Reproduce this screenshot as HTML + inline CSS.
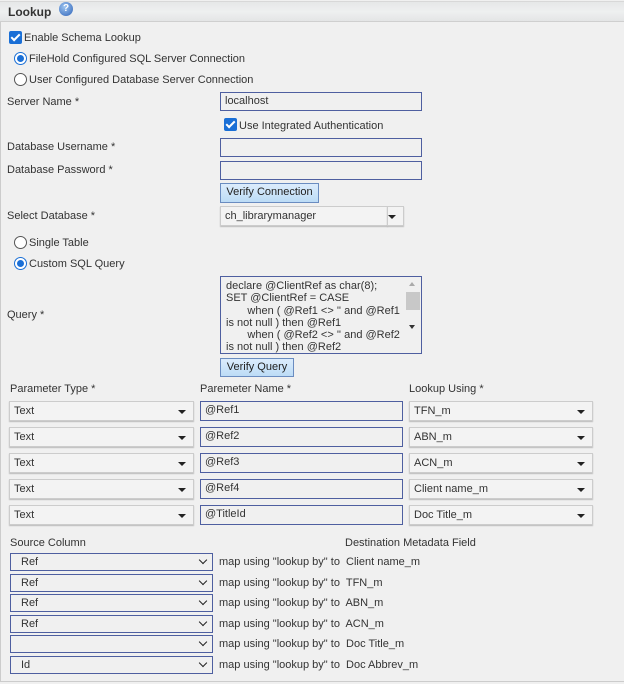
<!DOCTYPE html>
<html><head><meta charset="utf-8"><style>
*{box-sizing:border-box}
body{margin:0;width:624px;height:684px;background:#f0f0f0;font-family:"Liberation Sans",Arial,sans-serif;font-size:11px;color:#333;position:relative;overflow:hidden}
.a{position:absolute;white-space:nowrap}
.hdr{position:absolute;left:0;top:1px;width:624px;height:21px;background:linear-gradient(#e6e7e8,#eef0f0 50%,#e4e5e6);border-top:1px solid #d8d8d8;border-bottom:1px solid #cfcfcf}
.cb{position:absolute;width:13px;height:13px;background:#1a6fd6;border-radius:2px}
.cb:after{content:"";position:absolute;left:4px;top:1px;width:3px;height:7px;border:solid #fff;border-width:0 2px 2px 0;transform:rotate(45deg)}
.rd{position:absolute;width:13px;height:13px;border-radius:50%;border:1px solid #555;background:#fff}
.rd.on{border:1px solid #1a6fd6}
.rd.on:after{content:"";position:absolute;left:2px;top:2px;width:7px;height:7px;border-radius:50%;background:#1a6fd6}
.in{position:absolute;border:1px solid #4e5fa0;background:#f0f0f0;padding:2px 4px;line-height:13px}
.btn{position:absolute;border:1px solid #6a8cc0;background:linear-gradient(#dcecfc,#bcdcf6);text-align:center;line-height:17px;color:#222}
.sel{position:absolute;border:1px solid #ccc;background:#f3f3f3;box-shadow:0 1px 1px #bbb;padding:0 4px;line-height:19px;height:20px}
.sel.ar:after{content:"";position:absolute;right:7px;top:8px;border:4px solid transparent;border-top:4px solid #222;border-bottom:0}
.s2{position:absolute;border:1px solid #4e5fa0;background:#f0f0f0;height:18px;line-height:16px;padding-left:10px}
.s2:after{content:"";position:absolute;right:6px;top:3px;width:5px;height:5px;border:solid #222;border-width:0 1.5px 1.5px 0;transform:rotate(45deg)}
</style></head><body>
<div class="hdr"></div>
<div class="a" style="left:8px;top:5px;font-weight:bold;font-size:12px">Lookup</div>
<div class="a" style="left:59px;top:2px;width:14px;height:14px;border-radius:50%;background:radial-gradient(circle at 40% 35%,#9cc4f0,#2f63b8);color:#fff;font-size:10px;font-weight:bold;text-align:center;line-height:14px">?</div>
<div class="cb" style="left:9px;top:31px"></div><div class="a" style="left:24px;top:32px">Enable Schema Lookup</div>
<div class="rd on" style="left:14px;top:52px"></div><div class="a" style="left:29px;top:53px">FileHold Configured SQL Server Connection</div>
<div class="rd" style="left:14px;top:73px"></div><div class="a" style="left:29px;top:74px">User Configured Database Server Connection</div>
<div class="a" style="left:7px;top:96px">Server Name *</div>
<div class="in" style="left:220px;top:92px;width:202px;height:19px">localhost</div>
<div class="cb" style="left:224px;top:118px"></div><div class="a" style="left:239px;top:120px">Use Integrated Authentication</div>
<div class="a" style="left:7px;top:141px">Database Username *</div>
<div class="in" style="left:220px;top:138px;width:202px;height:19px"></div>
<div class="a" style="left:7px;top:164px">Database Password *</div>
<div class="in" style="left:220px;top:161px;width:202px;height:19px"></div>
<div class="btn" style="left:220px;top:183px;width:99px;height:20px">Verify Connection</div>
<div class="a" style="left:7px;top:210px">Select Database *</div>
<div class="sel" style="left:220px;top:206px;width:168px">ch_librarymanager</div>
<div class="sel ar" style="left:387px;top:206px;width:17px"></div>
<div class="rd" style="left:14px;top:236px"></div><div class="a" style="left:29px;top:237px">Single Table</div>
<div class="rd on" style="left:14px;top:257px"></div><div class="a" style="left:29px;top:258px">Custom SQL Query</div>
<div class="a" style="left:7px;top:309px">Query *</div>
<div class="in" style="left:220px;top:276px;width:202px;height:78px;padding:3px 18px 0 5px;white-space:pre;line-height:12.3px;overflow:hidden">declare @ClientRef as char(8);
SET @ClientRef = CASE
       when ( @Ref1 &lt;&gt; '' and @Ref1
is not null ) then @Ref1
       when ( @Ref2 &lt;&gt; '' and @Ref2
is not null ) then @Ref2</div>
<div class="a" style="left:406px;top:292px;width:14px;height:18px;background:#c8c8c8"></div>
<div class="a" style="left:409px;top:282px;border:3.5px solid transparent;border-bottom:4px solid #aaa;border-top:0"></div>
<div class="a" style="left:409px;top:325px;border:3.5px solid transparent;border-top:4px solid #333;border-bottom:0"></div>
<div class="btn" style="left:220px;top:358px;width:74px;height:19px">Verify Query</div>
<div class="a" style="left:10px;top:383px">Parameter Type *</div>
<div class="a" style="left:200px;top:383px">Paremeter Name *</div>
<div class="a" style="left:409px;top:383px">Lookup Using *</div>
<div class="sel ar" style="left:9px;top:401px;width:185px">Text</div><div class="in" style="left:200px;top:401px;width:203px;height:20px">@Ref1</div><div class="sel ar" style="left:409px;top:401px;width:184px">TFN_m</div>
<div class="sel ar" style="left:9px;top:427px;width:185px">Text</div><div class="in" style="left:200px;top:427px;width:203px;height:20px">@Ref2</div><div class="sel ar" style="left:409px;top:427px;width:184px">ABN_m</div>
<div class="sel ar" style="left:9px;top:453px;width:185px">Text</div><div class="in" style="left:200px;top:453px;width:203px;height:20px">@Ref3</div><div class="sel ar" style="left:409px;top:453px;width:184px">ACN_m</div>
<div class="sel ar" style="left:9px;top:479px;width:185px">Text</div><div class="in" style="left:200px;top:479px;width:203px;height:20px">@Ref4</div><div class="sel ar" style="left:409px;top:479px;width:184px">Client name_m</div>
<div class="sel ar" style="left:9px;top:505px;width:185px">Text</div><div class="in" style="left:200px;top:505px;width:203px;height:20px">@TitleId</div><div class="sel ar" style="left:409px;top:505px;width:184px">Doc Title_m</div>
<div class="a" style="left:10px;top:537px">Source Column</div>
<div class="a" style="left:345px;top:537px">Destination Metadata Field</div>
<div class="s2" style="left:10px;top:553px;width:203px">Ref</div><div class="a" style="left:219px;top:556px">map using "lookup by" to&nbsp; Client name_m</div>
<div class="s2" style="left:10px;top:574px;width:203px">Ref</div><div class="a" style="left:219px;top:577px">map using "lookup by" to&nbsp; TFN_m</div>
<div class="s2" style="left:10px;top:594px;width:203px">Ref</div><div class="a" style="left:219px;top:597px">map using "lookup by" to&nbsp; ABN_m</div>
<div class="s2" style="left:10px;top:615px;width:203px">Ref</div><div class="a" style="left:219px;top:618px">map using "lookup by" to&nbsp; ACN_m</div>
<div class="s2" style="left:10px;top:635px;width:203px"></div><div class="a" style="left:219px;top:638px">map using "lookup by" to&nbsp; Doc Title_m</div>
<div class="s2" style="left:10px;top:656px;width:203px">Id</div><div class="a" style="left:219px;top:659px">map using "lookup by" to&nbsp; Doc Abbrev_m</div>
<div class="a" style="left:0;top:681px;width:624px;height:1px;background:#ccc"></div>
<div class="a" style="left:0;top:22px;width:1px;height:660px;background:#ccc"></div>
</body></html>
